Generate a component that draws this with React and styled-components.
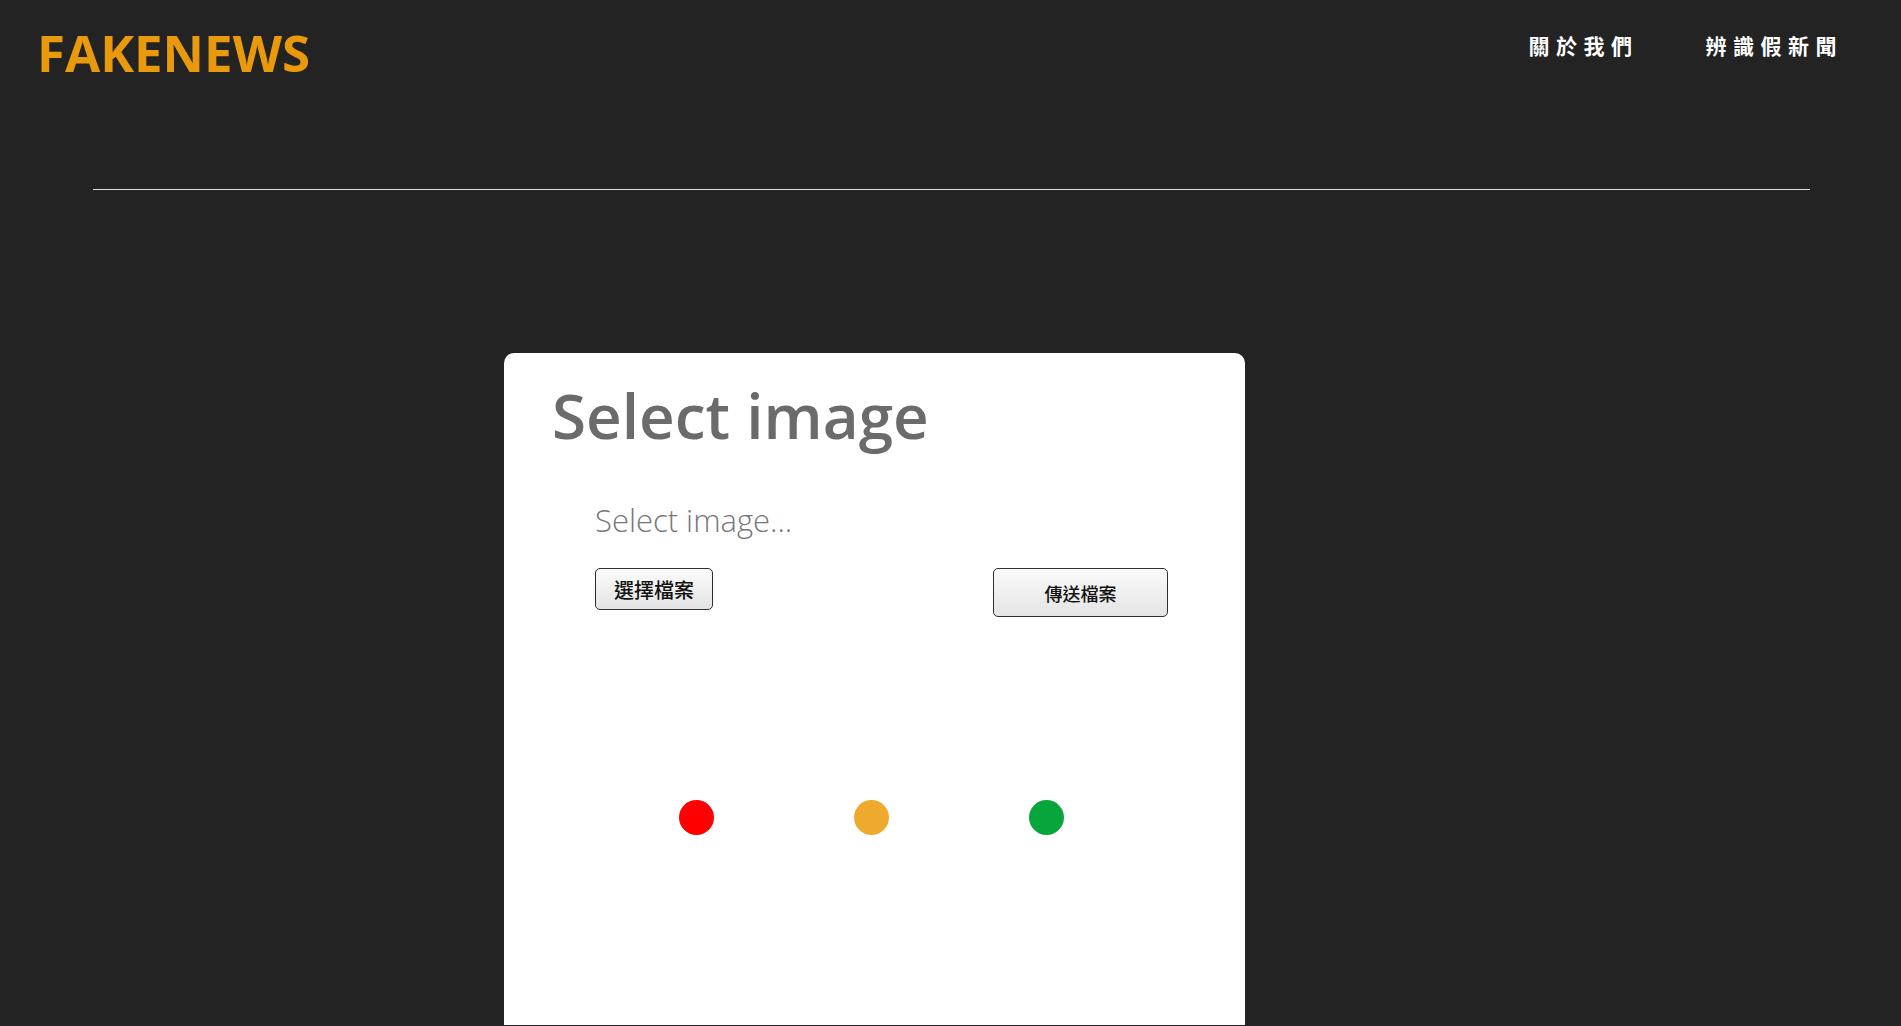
import React from "react";
import styled, { createGlobalStyle } from "styled-components";

const GlobalStyle = createGlobalStyle`
  html, body {
    margin: 0;
    padding: 0;
    background: #232323;
    font-family: "Open Sans", "Noto Sans CJK TC", sans-serif;
  }
`;

const navList = [
  { link: "about", Headline: "關於我們" },
  { link: "detect", Headline: "辨識假新聞" },
];

function App() {
  return (
    <>
      <GlobalStyle />
      <Header>
        <Logo>FAKENEWS</Logo>
        <NavMenu>
          {navList.map((elem) => (
            <NavItem key={elem.link}>{elem.Headline}</NavItem>
          ))}
        </NavMenu>
      </Header>
      <Divider />
      <Main>
        <Card>
          <Title>Select image</Title>
          <UploadForm>
            <Hint>Select image...</Hint>
            <ButtonRow>
              <FileLabel>
                選擇檔案
                <HiddenInput type="file" accept="image/*" />
              </FileLabel>
              <SendButton type="button">傳送檔案</SendButton>
            </ButtonRow>
          </UploadForm>
          <Lights>
            <Light color="#ff0000" />
            <Light color="#efa92c" />
            <Light color="#07a53b" />
          </Lights>
        </Card>
      </Main>
    </>
  );
}

export default App;

const Header = styled.header`
  display: flex;
  justify-content: space-between;
  align-items: flex-start;
  padding: 16px 58px 0 37px;
  height: 72px;
`;

const Logo = styled.div`
  color: #e8990c;
  font-family: "Open Sans", sans-serif;
  font-weight: 700;
  font-size: 51px;
  line-height: 72px;
  cursor: pointer;
`;

const NavMenu = styled.nav`
  display: flex;
  gap: 67px;
  margin-top: 19px;
`;

const NavItem = styled.a`
  color: #fff;
  font-family: "Noto Sans CJK TC", sans-serif;
  font-weight: 700;
  font-size: 21px;
  line-height: 21px;
  letter-spacing: 6.5px;
  cursor: pointer;
`;

const Divider = styled.hr`
  margin: 101px 91px 0 93px;
  border: none;
  height: 1px;
  background: #e0e0e0;
`;

const Main = styled.main`
  padding: 163px 0 0 504px;
  height: 672px;
  overflow: hidden;
`;

const Card = styled.section`
  width: 741px;
  min-height: 760px;
  background: #fff;
  border-radius: 10px 10px 0 0;
  padding-top: 20px;
  box-sizing: border-box;
`;

const Title = styled.h2`
  margin: 0;
  padding-left: 48px;
  color: #6b6b6b;
  font-family: "Open Sans", sans-serif;
  font-weight: 600;
  font-size: 62px;
  line-height: normal;
`;

const UploadForm = styled.form`
  padding: 42px 77px 0 91px;
`;

const Hint = styled.p`
  margin: 0;
  color: #777;
  font-family: "Open Sans", sans-serif;
  font-weight: 300;
  font-size: 31px;
  line-height: normal;
`;

const ButtonRow = styled.div`
  display: flex;
  justify-content: space-between;
  align-items: flex-start;
  margin-top: 27px;
`;

const buttonLook = `
  display: flex;
  align-items: center;
  justify-content: center;
  box-sizing: border-box;
  border: 1px solid #2e2e2e;
  border-radius: 5px;
  background: linear-gradient(#fbfbfb, #e4e4e4);
  color: #111;
  font-family: "Noto Sans CJK TC", sans-serif;
  cursor: pointer;
  padding: 0;
`;

const FileLabel = styled.label`
  ${buttonLook}
  width: 118px;
  height: 42px;
  font-size: 20px;
  font-weight: 500;
`;

const HiddenInput = styled.input`
  display: none;
`;

const SendButton = styled.button`
  ${buttonLook}
  width: 175px;
  height: 49px;
  font-size: 18px;
  font-weight: 500;
`;

const Lights = styled.div`
  display: flex;
  gap: 140px;
  padding: 183px 0 0 175px;
`;

const Light = styled.span`
  width: 35px;
  height: 35px;
  border-radius: 50%;
  background: ${({ color }) => color};
`;
